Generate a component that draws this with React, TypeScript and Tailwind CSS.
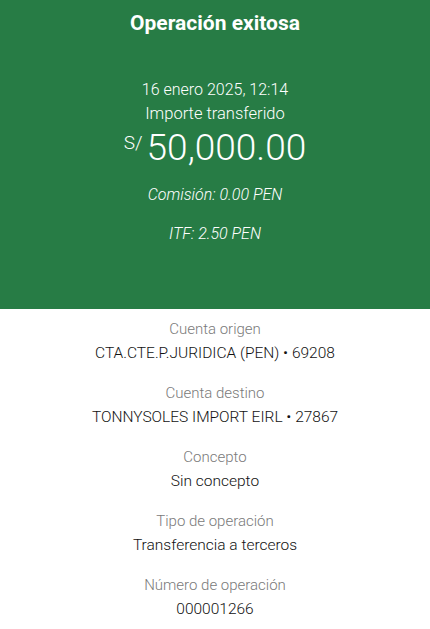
export default function App() {
  const rows = [
    { label: "Cuenta origen", value: "CTA.CTE.P.JURIDICA (PEN) • 69208" },
    { label: "Cuenta destino", value: "TONNYSOLES IMPORT EIRL • 27867" },
    { label: "Concepto", value: "Sin concepto" },
    { label: "Tipo de operación", value: "Transferencia a terceros" },
    { label: "Número de operación", value: "000001266" },
  ];

  return (
    <div className="min-h-screen bg-white font-['Roboto',sans-serif] text-center">
      <section className="bg-[#277c45] text-white h-[309px] flex flex-col items-center">
        <h1 className="mt-[9px] text-[21px] font-bold leading-[28px]">Operación exitosa</h1>
        <p className="mt-[41px] text-[16px] font-light leading-[24px]">16 enero 2025, 12:14</p>
        <p className="text-[16.5px] font-light leading-[24px]">Importe transferido</p>
        <div className="flex items-start justify-center mt-[1px]">
          <span className="text-[19px] font-light leading-[20px] mt-[6px] mr-[4px]">S/</span>
          <span className="text-[37px] font-light leading-[42px]">50,000.00</span>
        </div>
        <p className="mt-[14px] text-[16px] font-light italic leading-[24px]">Comisión: 0.00 PEN</p>
        <p className="mt-[15px] text-[16px] font-light italic leading-[24px]">ITF: 2.50 PEN</p>
      </section>
      <section className="flex flex-col items-center pt-[8px]">
        {rows.map((r) => (
          <div key={r.label} className="h-[64px] flex flex-col items-center">
            <p className="text-[15px] leading-[24px] text-[#7a7a7a] font-light">{r.label}</p>
            <p className="text-[15.5px] leading-[24px] text-[#121212] font-light">{r.value}</p>
          </div>
        ))}
      </section>
    </div>
  );
}
